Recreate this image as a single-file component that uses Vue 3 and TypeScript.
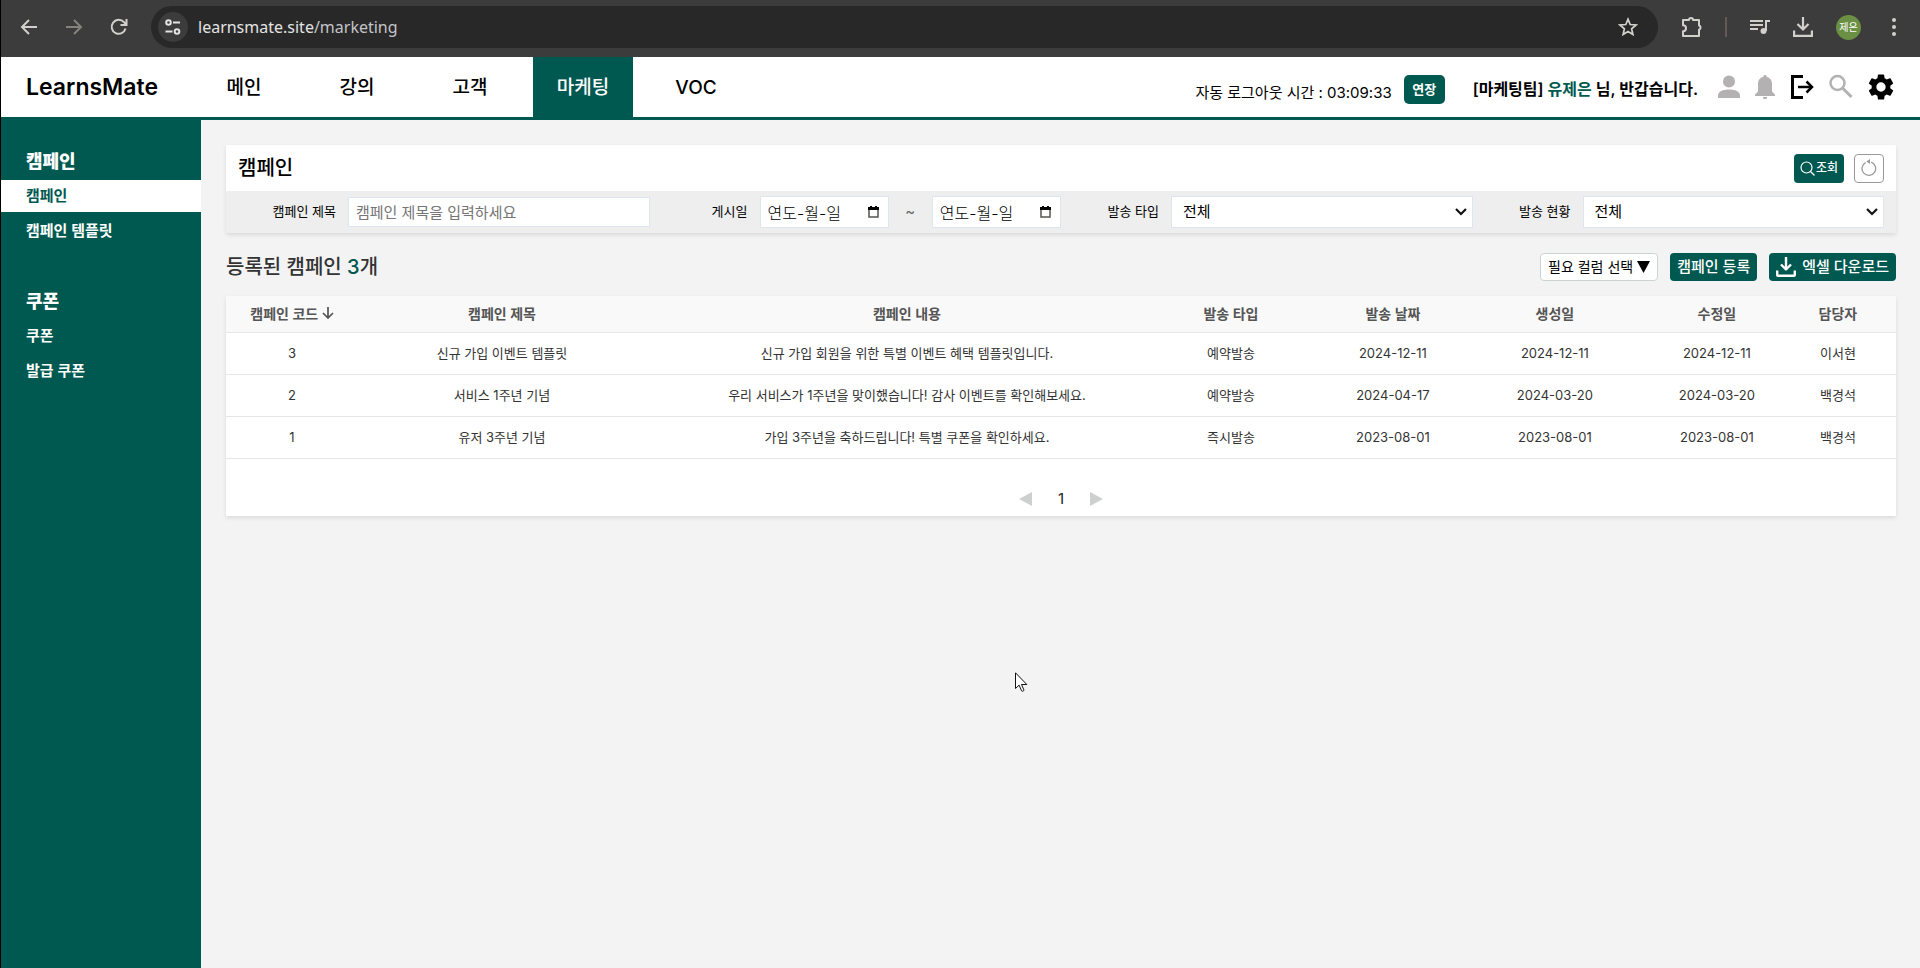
<script setup lang="ts">
import { ref } from 'vue'

interface Campaign {
  code: number
  title: string
  content: string
  type: string
  sentAt: string
  createdAt: string
  updatedAt: string
  manager: string
}

const menus: string[] = ['메인', '강의', '고객', '마케팅', 'VOC']
const activeMenu = ref('마케팅')

const sideGroups = [
  { title: '캠페인', items: ['캠페인', '캠페인 템플릿'] },
  { title: '쿠폰', items: ['쿠폰', '발급 쿠폰'] },
]

const columns: string[] = ['캠페인 제목', '캠페인 내용', '발송 타입', '발송 날짜', '생성일', '수정일', '담당자']

const campaigns: Campaign[] = [
  { code: 3, title: '신규 가입 이벤트 템플릿', content: '신규 가입 회원을 위한 특별 이벤트 혜택 템플릿입니다.', type: '예약발송', sentAt: '2024-12-11', createdAt: '2024-12-11', updatedAt: '2024-12-11', manager: '이서현' },
  { code: 2, title: '서비스 1주년 기념', content: '우리 서비스가 1주년을 맞이했습니다! 감사 이벤트를 확인해보세요.', type: '예약발송', sentAt: '2024-04-17', createdAt: '2024-03-20', updatedAt: '2024-03-20', manager: '백경석' },
  { code: 1, title: '유저 3주년 기념', content: '가입 3주년을 축하드립니다! 특별 쿠폰을 확인하세요.', type: '즉시발송', sentAt: '2023-08-01', createdAt: '2023-08-01', updatedAt: '2023-08-01', manager: '백경석' },
]

const keyword = ref('')
const startDate = ref('연도-월-일')
const endDate = ref('연도-월-일')
const sendType = ref('전체')
const sendStatus = ref('전체')
</script>

<template>
  <div class="window">
    <div class="browser">
      <div class="browser-nav">
        <button class="ghost" aria-label="뒤로">
          <svg width="18" height="18" viewBox="0 0 18 18" fill="none" stroke="#d2d0cc" stroke-width="2"><path d="M17 9H3M9 2 2 9l7 7" /></svg>
        </button>
        <button class="ghost" aria-label="앞으로">
          <svg width="18" height="18" viewBox="0 0 18 18" fill="none" stroke="#85837c" stroke-width="2"><path d="M1 9h14M9 2l7 7-7 7" /></svg>
        </button>
        <button class="ghost" aria-label="새로고침">
          <svg width="18" height="18" viewBox="0 0 18 18" fill="none" stroke="#d2d0cc" stroke-width="2"><path d="M15.500 10.500A7 7 0 1 1 14 4.200L16 6.500M16.500 1v6h-6" /></svg>
        </button>
      </div>
      <div class="omnibox">
        <button class="site-info" aria-label="사이트 정보">
          <svg width="18" height="18" viewBox="0 0 18 18" fill="none" stroke="#e3e3e3" stroke-width="2"><circle cx="4.500" cy="4.500" r="2.300" /><path d="M9 4.500h7M1.500 13.500h7" /><circle cx="13" cy="13.500" r="2.300" /></svg>
        </button>
        <span class="url">learnsmate.site<span class="url-path">/marketing</span></span>
        <button class="ghost" aria-label="북마크">
          <svg width="20" height="20" viewBox="0 0 20 20" fill="none" stroke="#d2d0cc" stroke-width="1.700"><path d="m10 2.200 2.200 5.300 5.800.5-4.400 3.800 1.300 5.700-4.900-3-4.900 3 1.300-5.700L2 8l5.800-.5z" /></svg>
        </button>
      </div>
      <div class="browser-tools">
        <button class="ghost" aria-label="확장 프로그램">
          <svg width="22" height="22" viewBox="0 0 22 22"><path d="M3 4h6a2 2 0 0 1 4 0h6v5.500a2.200 2.200 0 0 1 0 4.200V20H3v-4.700a2.800 2.800 0 0 0 0-6z" fill="none" stroke="#d2d0cc" stroke-width="2" stroke-linejoin="round" /></svg>
        </button>
        <span class="divider"></span>
        <button class="ghost" aria-label="미디어">
          <svg width="20" height="18" viewBox="0 0 20 18" fill="none" stroke="#d2d0cc" stroke-width="2"><path d="M0 3h13M0 7h13M0 11h8M16 13V3h4" /><circle cx="13.500" cy="13" r="3" fill="#d2d0cc" stroke="none" /></svg>
        </button>
        <button class="ghost" aria-label="다운로드">
          <svg width="20" height="20" viewBox="0 0 20 20" fill="none" stroke="#d2d0cc" stroke-width="2.200"><path d="M10 0v12M4.500 7l5.500 5.500L15.500 7M1.100 13.500v5.400h17.800v-5.400" /></svg>
        </button>
        <span class="avatar">제은</span>
        <button class="ghost" aria-label="메뉴">
          <svg width="4" height="18" viewBox="0 0 4 18" fill="#d2d0cc"><circle cx="2" cy="2" r="2" /><circle cx="2" cy="9" r="2" /><circle cx="2" cy="16" r="2" /></svg>
        </button>
      </div>
    </div>

    <header class="header">
      <a class="logo" href="#">LearnsMate</a>
      <nav class="menu">
        <a v-for="menu in menus" :key="menu" href="#" :class="{ active: menu === activeMenu }" @click.prevent="activeMenu = menu">{{ menu }}</a>
      </nav>
      <div class="session">
        <span class="timer">자동 로그아웃 시간 : 03:09:33</span>
        <button class="extend">연장</button>
      </div>
      <strong class="greeting">[마케팅팀] <em>유제은</em> 님, 반갑습니다.</strong>
      <div class="header-icons">
        <button class="ghost" aria-label="내 정보">
          <svg width="22" height="26" viewBox="0 0 22 26" fill="#b3b1b1"><circle cx="11" cy="7.500" r="6" /><path d="M0 24v-2.500C0 17.500 5 15.500 11 15.500s11 2 11 6V24z" /></svg>
        </button>
        <button class="ghost" aria-label="알림">
          <svg width="20" height="26" viewBox="0 0 20 26" fill="#b3b1b1"><path d="M10 1c1 0 1.600.7 1.600 1.700 3.400.8 5.400 3.500 5.400 7.300v7.500l3 3V22H0v-1.500l3-3V10c0-3.800 2-6.500 5.400-7.300C8.400 1.700 9 1 10 1zM7.800 23h4.400a2.200 2.200 0 0 1-4.400 0z" /></svg>
        </button>
        <button class="ghost" aria-label="로그아웃">
          <svg width="24" height="26" viewBox="0 0 24 26" fill="none" stroke="#000" stroke-width="3"><path d="M13 2.500H2.500v21H13" /><path d="M8 13h13" stroke-width="2.500" /><path d="m16.500 7.500 5.500 5.500-5.500 5.500" stroke-width="2.500" /></svg>
        </button>
        <button class="ghost" aria-label="검색">
          <svg width="24" height="26" viewBox="0 0 24 26" fill="none" stroke="#b3b1b1"><circle cx="8.500" cy="9" r="7" stroke-width="2.500" /><path d="m13.500 14 9 9" stroke-width="3" /></svg>
        </button>
        <button class="ghost" aria-label="설정">
          <svg width="26" height="26" viewBox="2 2 20 20"><path d="M19.140 12.940c.04-.3.060-.61.060-.94 0-.32-.02-.64-.07-.94l2.030-1.580a.49.49 0 0 0 .12-.61l-1.920-3.320a.49.49 0 0 0-.59-.22l-2.390.96a7 7 0 0 0-1.620-.94l-.36-2.540a.48.480 0 0 0-.48-.41h-3.840a.48.480 0 0 0-.47.41l-.36 2.540c-.59.240-1.130.57-1.620.94l-2.390-.96a.49.49 0 0 0-.59.220L2.740 8.870a.49.49 0 0 0 .12.610l2.030 1.580a7 7 0 0 0 0 1.880l-2.030 1.580a.49.490 0 0 0-.12.610l1.920 3.320c.12.22.37.29.59.220l2.390-.96c.5.380 1.030.7 1.620.94l.36 2.540c.05.240.24.410.48.410h3.840c.24 0 .44-.17.47-.41l.36-2.540a7 7 0 0 0 1.620-.94l2.390.96c.22.080.47 0 .59-.22l1.920-3.320a.49.490 0 0 0-.12-.61zM12 15.600a3.600 3.600 0 1 1 0-7.200 3.600 3.600 0 0 1 0 7.200z" /></svg>
        </button>
      </div>
    </header>

    <div class="body">
      <aside class="sidebar">
        <section v-for="(group, g) in sideGroups" :key="group.title">
          <h2>{{ group.title }}</h2>
          <a v-for="(item, i) in group.items" :key="item" href="#" :class="{ active: g === 0 && i === 0 }">{{ item }}</a>
        </section>
      </aside>

      <main class="main">
        <form class="card filter" @submit.prevent>
          <div class="filter-head">
            <h1>캠페인</h1>
            <button class="search" type="submit">
              <svg width="15" height="15" viewBox="0 0 15 15" fill="none" stroke="#fff" stroke-width="1.200"><circle cx="6.500" cy="6.500" r="5.500" /><path d="m10.500 10.500 4 4" /></svg>조회
            </button>
            <button class="reset" type="reset" aria-label="초기화">
              <svg width="16" height="18" viewBox="0 0 16 18"><path d="M10.200 3.200a6.800 6.800 0 1 1-5.600.4" fill="none" stroke="#999" stroke-width="1.300" /><path d="M9 0v5L5.300 2.500z" fill="#999" /></svg>
            </button>
          </div>
          <div class="filter-row">
            <div class="field">
              <label for="keyword">캠페인 제목</label>
              <input id="keyword" v-model="keyword" class="control" type="text" placeholder="캠페인 제목을 입력하세요">
            </div>
            <div class="field">
              <label for="start">게시일</label>
              <div class="range">
                <span class="date">
                  <input id="start" v-model="startDate" class="control" type="text">
                  <svg width="11" height="12" viewBox="0 0 11 12"><path d="M1 2h9v9H1z" fill="none" stroke="#55554f" stroke-width="1.500" /><path d="M0 1h11v3H0zM2 0h2v2H2zM7 0h2v2H7z" /></svg>
                </span>
                <span class="tilde">~</span>
                <span class="date">
                  <input v-model="endDate" class="control" type="text" aria-label="게시 종료일">
                  <svg width="11" height="12" viewBox="0 0 11 12"><path d="M1 2h9v9H1z" fill="none" stroke="#55554f" stroke-width="1.500" /><path d="M0 1h11v3H0zM2 0h2v2H2zM7 0h2v2H7z" /></svg>
                </span>
              </div>
            </div>
            <div class="field">
              <label for="type">발송 타입</label>
              <span class="select">
                <select id="type" v-model="sendType" class="control"><option>전체</option><option>예약발송</option><option>즉시발송</option></select>
                <svg width="12" height="8" viewBox="0 0 12 8" fill="none" stroke="#111" stroke-width="2.200"><path d="m1 1 5 5 5-5" /></svg>
              </span>
            </div>
            <div class="field">
              <label for="status">발송 현황</label>
              <span class="select">
                <select id="status" v-model="sendStatus" class="control"><option>전체</option><option>발송 완료</option><option>발송 예정</option></select>
                <svg width="12" height="8" viewBox="0 0 12 8" fill="none" stroke="#111" stroke-width="2.200"><path d="m1 1 5 5 5-5" /></svg>
              </span>
            </div>
          </div>
        </form>

        <div class="toolbar">
          <h2>등록된 캠페인 <em>{{ campaigns.length }}</em>개</h2>
          <button class="column-pick">필요 컬럼 선택
            <svg width="13" height="12" viewBox="0 0 13 12"><path d="M0 0h13L6.500 12z" /></svg>
          </button>
          <button class="primary">캠페인 등록</button>
          <button class="primary">
            <svg width="20" height="20" viewBox="0 0 20 20" fill="none" stroke="#fff" stroke-width="2.400" stroke-linejoin="round"><path d="M10 0v12M5 7.500l5 5 5-5M1.200 13.500V18q0 .8.800.8h16q.8 0 .8-.8v-4.500" /></svg>엑셀 다운로드
          </button>
        </div>

        <div class="card">
          <table>
            <colgroup>
              <col class="c-code"><col class="c-title"><col class="c-content"><col class="c-date"><col class="c-date"><col class="c-date"><col class="c-date"><col>
            </colgroup>
            <thead>
              <tr>
                <th>캠페인 코드 <svg width="12" height="12" viewBox="0 0 12 12" fill="none" stroke="#555" stroke-width="1.700"><path d="M6 0v11M1 6l5 5 5-5" /></svg></th>
                <th v-for="column in columns" :key="column">{{ column }}</th>
              </tr>
            </thead>
            <tbody>
              <tr v-for="row in campaigns" :key="row.code">
                <td>{{ row.code }}</td>
                <td>{{ row.title }}</td>
                <td>{{ row.content }}</td>
                <td>{{ row.type }}</td>
                <td>{{ row.sentAt }}</td>
                <td>{{ row.createdAt }}</td>
                <td>{{ row.updatedAt }}</td>
                <td>{{ row.manager }}</td>
              </tr>
            </tbody>
          </table>
          <div class="pagination">
            <button class="ghost" aria-label="이전 페이지" disabled>
              <svg width="13" height="14" viewBox="0 0 13 14" fill="#cdd0ce"><path d="M13 0v14L0 7z" /></svg>
            </button>
            <button class="ghost page">1</button>
            <button class="ghost" aria-label="다음 페이지" disabled>
              <svg width="13" height="14" viewBox="0 0 13 14" fill="#cdd0ce"><path d="M0 0v14l13-7z" /></svg>
            </button>
          </div>
        </div>
      </main>
    </div>

    <svg class="pointer" width="13" height="20" viewBox="0 0 13 20"><path d="M.5.800v15.700l3.600-3.400 2.500 5.800c.7.800 2.600 0 2.300-1l-2.400-5.400h5.300z" fill="#fff" stroke="#111" /></svg>
  </div>
</template>

<style>
body {
  margin: 0;
  background: #f3f3f3;
}
</style>

<style scoped>
* {
  box-sizing: border-box;
}
.window {
  position: relative;
  display: flex;
  flex-direction: column;
  min-height: 100vh;
  border-left: 1px solid #000;
  background: #f3f3f3;
  color: #000;
  font-family: Inter, "Noto Sans CJK KR", sans-serif;
  line-height: 1.2;
}
h1, h2 {
  margin: 0;
}
em {
  font-style: normal;
  color: #005950;
}
a {
  color: inherit;
  text-decoration: none;
}
button, input, select {
  font-family: inherit;
  line-height: inherit;
}
.ghost {
  display: flex;
  padding: 0;
  border: 0;
  background: none;
}

.browser {
  display: flex;
  align-items: center;
  height: 57px;
  padding: 0 24px 3px 19px;
  background: #3c3c3c;
}
.browser-nav {
  display: flex;
  gap: 27px;
  width: 131px;
}
.omnibox {
  flex: 1;
  display: flex;
  align-items: center;
  height: 42px;
  padding: 0 20px 0 7px;
  border-radius: 21px;
  background: #282828;
}
.site-info {
  display: flex;
  align-items: center;
  justify-content: center;
  width: 30px;
  height: 30px;
  padding: 0;
  border: 0;
  border-radius: 50%;
  background: #3c3c3c;
}
.url {
  flex: 1;
  margin-left: 10px;
  color: #e3e3e3;
  font: 16px "Noto Sans", sans-serif;
}
.url-path {
  color: #c4c4c8;
}
.browser-tools {
  display: flex;
  align-items: center;
  gap: 23px;
  margin-left: 22px;
}
.divider {
  width: 2px;
  height: 20px;
  background: #655858;
}
.avatar {
  width: 25px;
  border-radius: 50%;
  background: #6b8f43;
  color: #fff;
  font-size: 10px;
  line-height: 25px;
  text-align: center;
}
.browser-tools .ghost:last-child {
  margin-left: 8px;
}

.header {
  display: flex;
  align-items: center;
  height: 63px;
  padding-right: 26px;
  border-bottom: 3px solid #005950;
  background: #fff;
}
.logo {
  width: 193px;
  padding-top: 2px;
  padding-left: 25px;
  font-size: 23px;
  font-weight: 600;
}
.menu {
  display: flex;
  align-self: stretch;
  gap: 13px;
  margin-right: auto;
}
.menu a {
  display: flex;
  align-items: center;
  justify-content: center;
  width: 100px;
  padding-top: 2px;
  font-size: 19px;
  font-weight: 500;
}
.menu a.active {
  background: #005950;
  color: #fff;
}
.session {
  display: flex;
  align-items: center;
  gap: 12px;
  padding-top: 5px;
}
.timer {
  padding-top: 6px;
  font-size: 15px;
}
.extend {
  width: 41px;
  height: 29px;
  padding: 0;
  border: 0;
  border-radius: 5px;
  background: #005950;
  color: #fff;
  font-size: 13px;
  font-weight: 700;
}
.greeting {
  margin-left: 28px;
  padding-top: 6px;
  font-size: 16px;
  font-weight: 600;
}
.header-icons {
  display: flex;
  gap: 15px;
  margin-left: 20px;
}

.body {
  flex: 1;
  display: flex;
}
.sidebar {
  width: 200px;
  padding-top: 27px;
  background: #005950;
  color: #fff;
}
.sidebar section {
  display: flex;
  flex-direction: column;
  gap: 3px;
  margin-bottom: 40px;
}
.sidebar h2 {
  padding-left: 25px;
  font-size: 18px;
  font-weight: 800;
  line-height: 30px;
}
.sidebar a {
  padding-left: 25px;
  font-size: 15px;
  font-weight: 600;
  line-height: 32px;
}
.sidebar a.active {
  background: #fff;
  color: #005950;
}

.main {
  flex: 1;
  padding: 25px 24px 25px 25px;
}
.card {
  background: #fff;
  box-shadow: 0 2px 4px rgba(0, 0, 0, 0.1);
}
.filter-head {
  display: flex;
  align-items: center;
  gap: 10px;
  height: 46px;
  padding: 0 12px;
}
.filter-head h1 {
  flex: 1;
  font-size: 20px;
  font-weight: 500;
}
.search, .reset {
  display: flex;
  align-items: center;
  justify-content: center;
  height: 29px;
  padding: 0;
  border-radius: 4px;
}
.search {
  gap: 1px;
  width: 50px;
  border: 0;
  background: #005950;
  color: #fff;
  font-size: 12px;
  font-weight: 500;
}
.reset {
  width: 30px;
  border: 1px solid #999;
  background: #fff;
}
.filter-row {
  display: grid;
  grid-template-columns: repeat(4, 1fr);
  align-items: center;
  height: 42px;
  padding: 0 12px;
  background: #eee;
}
.field {
  display: flex;
  align-items: center;
  gap: 12px;
}
.field label {
  width: 98px;
  font-size: 13px;
  text-align: right;
}
.field > .control, .range, .select {
  flex: 1;
  min-width: 0;
}
.control {
  width: 100%;
  height: 32px;
  padding: 0 7px;
  border: 1px solid #dfe5ee;
  border-radius: 0;
  background: #fff;
  color: #000;
  font-size: 15px;
}
.field > .control {
  height: 30px;
}
.control::placeholder {
  color: #757575;
}
.range {
  display: flex;
  align-items: center;
}
.date, .select {
  position: relative;
  display: flex;
  align-items: center;
}
.date {
  flex: 1;
}
.date .control {
  font-size: 16px;
  font-weight: 300;
}
.date svg {
  position: absolute;
  right: 10px;
}
.tilde {
  width: 43px;
  color: #666;
  font-size: 15px;
  text-align: center;
}
.select select {
  padding-left: 11px;
  appearance: none;
}
.select svg {
  position: absolute;
  right: 6px;
}

.toolbar {
  display: flex;
  align-items: center;
  gap: 12px;
  height: 28px;
  margin: 20px 0 15px;
}
.toolbar h2 {
  flex: 1;
  color: #333;
  font-size: 20px;
  font-weight: 500;
}
.column-pick, .primary {
  display: flex;
  align-items: center;
  justify-content: center;
  gap: 6px;
  height: 28px;
  padding: 0 7px;
  border: 0;
  border-radius: 4px;
  white-space: nowrap;
}
.column-pick {
  gap: 4px;
  border: 1px solid #ccd3d0;
  background: #fff;
  color: #000;
  font-size: 14px;
}
.primary {
  background: #005950;
  color: #fff;
  font-size: 15px;
  font-weight: 500;
}

table {
  width: 100%;
  border-collapse: collapse;
  table-layout: fixed;
}
.c-code {
  width: 114px;
}
.c-title {
  width: 19.4%;
}
.c-content {
  width: 29.1%;
}
.c-date {
  width: 9.7%;
}
th, td {
  padding: 1px 0 0;
  border-bottom: 1px solid #e6e6e6;
  text-align: center;
}
th:first-child, td:first-child {
  padding-left: 18px;
}
th:last-child, td:last-child {
  padding-right: 18px;
}
th {
  height: 36px;
  background: #f9f9f9;
  color: #555;
  font-size: 14px;
  font-weight: 600;
}
td {
  height: 42px;
  color: #333;
  font-size: 13px;
}
.pagination {
  display: flex;
  align-items: center;
  justify-content: center;
  gap: 26px;
  height: 57px;
  padding-top: 24px;
}
.page {
  font-size: 15px;
  color: #222;
}
.pointer {
  position: absolute;
  top: 672px;
  left: 1014px;
}
</style>
